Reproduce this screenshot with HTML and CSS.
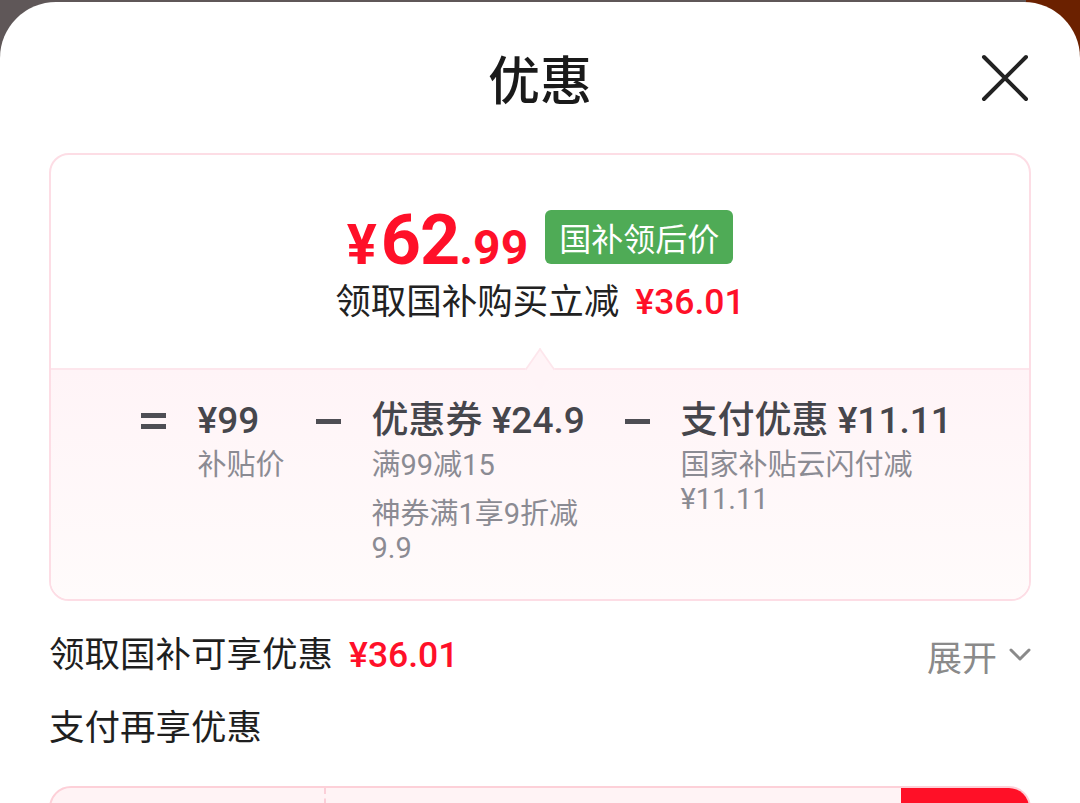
FILE: index.html
```html
<!DOCTYPE html>
<html lang="zh-CN">

<head>
    <meta charset="UTF-8">
    <meta name="viewport" content="width=device-width, initial-scale=1.0">
    <title>优惠</title>
    <link rel="stylesheet" href="styles.css">
</head>

<body>
    <div class="backdrop"></div>

    <section class="sheet">
        <header class="sheet-head">
            <span></span>
            <h1 class="sheet-title">优惠</h1>
            <button class="close-btn" aria-label="关闭">
                <svg width="48" height="48" viewBox="0 0 48 48">
                    <path d="M3 3 L45 45 M45 3 L3 45" stroke="#222" stroke-width="4" stroke-linecap="round" fill="none" />
                </svg>
            </button>
        </header>

        <div class="summary-card">
            <div class="summary-top">
                <div class="final-price">
                    <span class="price">
                        <span class="price-yen">¥</span><span class="price-int">62</span><span class="price-dec">.99</span>
                    </span>
                    <span class="price-tag">国补领后价</span>
                </div>
                <div class="save-line">领取国补购买立减<span class="red num">¥36.01</span></div>
            </div>

            <div class="summary-bottom">
                <div class="formula">
                    <div class="op"><span class="op-eq"></span></div>
                    <div class="term">
                        <div class="term-title">¥99</div>
                        <div class="term-sub">补贴价</div>
                    </div>
                    <div class="op"><span class="op-minus"></span></div>
                    <div class="term term-coupon">
                        <div class="term-title">优惠券 ¥24.9</div>
                        <div class="term-sub">满99减15</div>
                        <div class="term-sub">神券满1享9折减9.9</div>
                    </div>
                    <div class="op"><span class="op-minus"></span></div>
                    <div class="term term-pay">
                        <div class="term-title">支付优惠 ¥11.11</div>
                        <div class="term-sub">国家补贴云闪付减¥11.11</div>
                    </div>
                </div>
            </div>
        </div>

        <div class="row">
            <div class="row-label">领取国补可享优惠<span class="red num">¥36.01</span></div>
            <div class="row-more">
                展开
                <svg width="22" height="14" viewBox="0 0 22 14">
                    <path d="M2 2 L11 11 L20 2" stroke="#8a8a8a" stroke-width="3" fill="none" stroke-linecap="round" stroke-linejoin="round" />
                </svg>
            </div>
        </div>

        <div class="row row-pay">
            <div class="row-label">支付再享优惠</div>
        </div>

        <div class="pay-box">
            <div class="pay-cell pay-cell-first"></div>
            <div class="pay-cell pay-cell-mid"></div>
            <div class="pay-cell pay-cell-btn"></div>
        </div>
    </section>
</body>

</html>
```

FILE: styles.css
```css
body {
    margin: 0;
    height: 803px;
    overflow: hidden;
    font-family: Roboto, "Noto Sans CJK SC", sans-serif;
    color: #1f1f1f;
    background: linear-gradient(to right, #5f5758 0, #5f5758 95%, #6b2100 95%);
}

.backdrop {
    height: 2px;
}

.sheet {
    background-color: #fff;
    border-radius: 56px 56px 0 0;
    padding: 0 49px;
    height: 900px;
}

.sheet-head {
    display: grid;
    grid-template-columns: 1fr auto 1fr;
    align-items: center;
    padding-top: 44px;
    height: 64px;
}

.sheet-title {
    margin: 0;
    font-size: 52px;
    font-weight: 500;
    line-height: 64px;
    color: #1a1a1a;
    font-family: "Noto Sans CJK SC", sans-serif;
}

.close-btn {
    justify-self: end;
    margin-right: 2px;
    padding: 0;
    border: none;
    background: none;
    display: flex;
}

.summary-card {
    margin-top: 43px;
    border: 2px solid #fddde5;
    border-radius: 20px;
    overflow: hidden;
}

.summary-top {
    display: flex;
    flex-direction: column;
    align-items: center;
    padding: 55px 0 46px;
}

.final-price {
    display: flex;
    align-items: center;
    gap: 17px;
    height: 60px;
}

.price {
    display: block;
    height: 60px;
    line-height: 60px;
    color: #ff1029;
    font-weight: 700;
    white-space: nowrap;
}

.price-yen {
    font-size: 56px;
    margin-right: 4px;
}

.price-int {
    font-size: 70px;
    letter-spacing: -1px;
}

.price-dec {
    font-size: 48px;
}

.price-tag {
    margin-top: -6px;
    background-color: #4fab56;
    color: #fff;
    font-family: "Noto Sans CJK SC", sans-serif;
    font-size: 32px;
    line-height: 54px;
    padding: 0 14px;
    border-radius: 6px;
}

.save-line {
    margin-top: 12px;
    font-size: 35.5px;
    line-height: 40px;
    color: #222;
}

.red {
    color: #ff1029;
}

.num {
    font-weight: 500;
    margin-left: 16px;
}

.summary-bottom {
    position: relative;
    border-top: 2px solid #fde6ec;
    background: linear-gradient(to bottom, #fff4f7, #fffbfb);
    padding: 30px 0 34px;
}

/* little notch pointing at the price */
.summary-bottom::before {
    content: "";
    position: absolute;
    top: -16px;
    left: 474px;
    width: 30px;
    height: 30px;
    background: #fff4f7;
    border-top: 2px solid #fde6ec;
    border-left: 2px solid #fde6ec;
    box-sizing: border-box;
    transform: scaleX(0.7) rotate(45deg);
}

.formula {
    display: flex;
    justify-content: center;
    align-items: flex-start;
    gap: 31px;
    padding-left: 4px;
}

.op {
    height: 42px;
    display: flex;
    align-items: center;
}

.op-eq {
    width: 25px;
    height: 6px;
    border-top: 5px solid #4e4e54;
    border-bottom: 5px solid #4e4e54;
}

.op-minus {
    width: 25px;
    height: 5px;
    background-color: #4e4e54;
}

.term-title {
    font-size: 37px;
    font-weight: 500;
    line-height: 42px;
    color: #46464c;
    white-space: nowrap;
}

.term-sub {
    font-size: 29px;
    line-height: 34px;
    color: #8b8b93;
    margin-top: 6px;
}

.term-sub + .term-sub {
    margin-top: 15px;
}

.term-coupon {
    max-width: 222px;
}

.term-pay {
    max-width: 262px;
}

.row {
    display: flex;
    justify-content: space-between;
    align-items: center;
    margin-top: 30px;
    height: 48px;
}

.row-label {
    font-size: 35.5px;
    line-height: 48px;
    color: #1f1f1f;
}

.row-more {
    display: flex;
    align-items: center;
    gap: 12px;
    font-size: 35px;
    color: #8a8a8a;
}

.row-pay {
    margin-top: 25px;
}

.pay-box {
    margin-top: 34px;
    display: flex;
    height: 100px;
    border: 2px solid #fdd0d8;
    border-radius: 22px;
    background-color: #fff3f5;
    overflow: hidden;
}

.pay-cell-first {
    width: 273px;
    border-right: 2px dashed #fbcfd8;
}

.pay-cell-mid {
    flex: 1;
}

.pay-cell-btn {
    width: 128px;
    background-color: #ff1027;
}
```
